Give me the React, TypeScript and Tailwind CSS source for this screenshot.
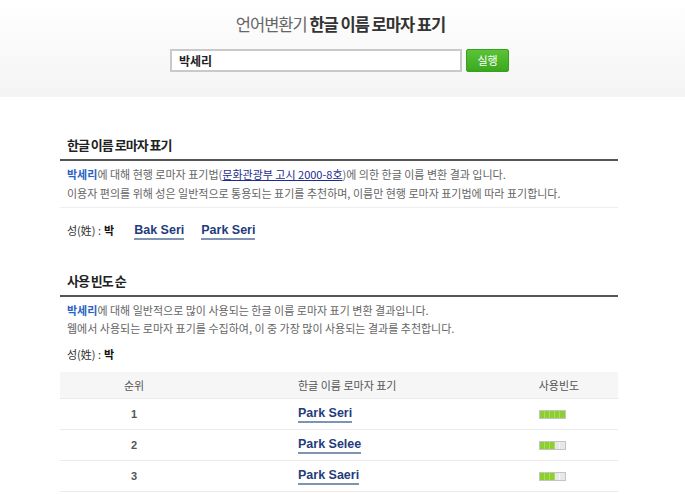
import React from "react";

const KR = "font-['Noto_Sans_CJK_KR',_'Noto_Sans',_sans-serif]";
const LAT = "font-['Liberation_Sans',_'Noto_Sans_CJK_KR',_sans-serif]";

function Bar({ filled }: { filled: number }) {
  return (
    <div className="flex h-[9px] w-[27px] border border-[#c4c4c4] mr-[14px]">
      {[0, 1, 2, 3, 4].map((i) => (
        <div
          key={i}
          className={
            i < filled
              ? "flex-1 bg-[#8ccf2f] border-r border-[#a9de5c] last:border-r-0"
              : "flex-1 bg-[#e8e8e8] border-r border-[#f4f4f4] last:border-r-0"
          }
        />
      ))}
    </div>
  );
}

function NameLink({ children }: { children: React.ReactNode }) {
  return (
    <span
      className={`${LAT} font-bold text-[12.5px] text-[#1f3c7c] border-b-2 border-[#7f93b3] leading-[15px] inline-block`}
    >
      {children}
    </span>
  );
}

export default function App() {
  const rows = [
    { rank: 1, name: "Park Seri", filled: 5 },
    { rank: 2, name: "Park Selee", filled: 3 },
    { rank: 3, name: "Park Saeri", filled: 3 },
  ];
  return (
    <div className={`${KR} w-[685px] h-[494px] overflow-hidden bg-white`}>
      <div className="h-[97px] bg-gradient-to-b from-white to-[#f4f4f4] pt-[12px]">
        <div className="text-center text-[16.5px] leading-[24px] tracking-[-1px] pr-[4px]">
          <span className="text-[#666]">언어변환기 </span>
          <span className="text-[#333] font-bold">한글 이름 로마자 표기</span>
        </div>
        <div className="flex mt-[13px] ml-[170px] gap-[4px]">
          <div className="w-[292px] h-[23px] border-2 border-[#c9c9c9] bg-white flex items-center pl-[7px]">
            <span className="text-[12px] font-bold text-[#222]">박세리</span>
          </div>
          <div className="w-[43px] h-[23px] rounded-[2px] bg-gradient-to-b from-[#5ac436] to-[#3aa81e] border border-[#3a9e1e] flex items-center justify-center">
            <span className="text-[11px] text-white">실행</span>
          </div>
        </div>
      </div>

      <div className="w-[558px] ml-[60px]">
        <div className="mt-[38px] pl-[7px] pb-[4px] text-[13px] leading-[20px] font-bold text-[#222] tracking-[-1px] border-b-2 border-[#555]">
          한글 이름 로마자 표기
        </div>
        <div className="pl-[7px] pt-[4px] pb-[4px] text-[11px] leading-[19px] text-[#666] border-b border-[#eeeeee]">
          <div>
            <span className="font-bold text-[#2a63c4]">박세리</span>에 대해 현행 로마자 표기법(
            <span className="text-[#1c2c8a] underline">문화관광부 고시 2000-8호</span>)에 의한 한글 이름 변환 결과 입니다.
          </div>
          <div>이용자 편의를 위해 성은 일반적으로 통용되는 표기를 추천하며, 이름만 현행 로마자 표기법에 따라 표기합니다.</div>
        </div>
        <div className="mt-[12px] pl-[7px] h-[20px] flex items-center text-[11px] text-[#333]">
          <span>성(姓) : </span>
          <span className="font-bold text-[#111] ml-[3px]">박</span>
          <span className="ml-[20px]">
            <NameLink>Bak Seri</NameLink>
          </span>
          <span className="ml-[17px]">
            <NameLink>Park Seri</NameLink>
          </span>
        </div>

        <div className="mt-[31px] pl-[7px] pb-[4px] text-[13px] leading-[20px] font-bold text-[#222] tracking-[-1px] border-b-2 border-[#555]">
          사용 빈도 순
        </div>
        <div className="pl-[7px] pt-[4px] text-[11px] leading-[18px] text-[#666]">
          <div>
            <span className="font-bold text-[#2a63c4]">박세리</span>에 대해 일반적으로 많이 사용되는 한글 이름 로마자 표기 변환 결과입니다.
          </div>
          <div>웹에서 사용되는 로마자 표기를 수집하여, 이 중 가장 많이 사용되는 결과를 추천합니다.</div>
        </div>
        <div className="mt-[7px] pl-[7px] h-[20px] flex items-center text-[11px] text-[#333]">
          <span>성(姓) : </span>
          <span className="font-bold text-[#111] ml-[3px]">박</span>
        </div>

        <div className="mt-[8px]">
          <div className="grid grid-cols-[148px_292px_118px] h-[27px] bg-[#f6f6f6] border-b border-[#eaeaea] items-center text-[11px] text-[#555]">
            <div className="text-center">순위</div>
            <div className="pl-[90px]">한글 이름 로마자 표기</div>
            <div className="text-center">사용빈도</div>
          </div>
          {rows.map((r) => (
            <div
              key={r.rank}
              className="grid grid-cols-[148px_292px_118px] h-[31px] border-b border-[#eaeaea] items-center"
            >
              <div className={`${LAT} text-center text-[11px] font-bold text-[#555]`}>{r.rank}</div>
              <div className="pl-[90px] flex">
                <NameLink>{r.name}</NameLink>
              </div>
              <div className="flex justify-center">
                <Bar filled={r.filled} />
              </div>
            </div>
          ))}
        </div>
      </div>
    </div>
  );
}
